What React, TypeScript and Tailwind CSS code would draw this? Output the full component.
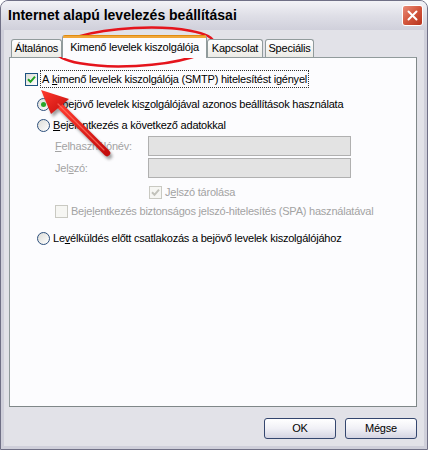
import React from "react";

function Check({ checked, disabled }: { checked?: boolean; disabled?: boolean }) {
  return (
    <span
      className={
        disabled
          ? "w-[13px] h-[13px] shrink-0 flex items-center justify-center border border-[#c9c9c2] bg-[#f6f6f3]"
          : "w-[13px] h-[13px] shrink-0 flex items-center justify-center border border-[#1c5180] bg-gradient-to-br from-[#dcdcd7] to-white"
      }
    >
      {checked && (
        <svg width="9" height="9" viewBox="0 0 9 9">
          <path
            d="M1 4.2 L3.5 6.8 L8 1.6"
            stroke={disabled ? "#c2c2bb" : "#21a121"}
            strokeWidth="2"
            fill="none"
          />
        </svg>
      )}
    </span>
  );
}

function Radio({ on }: { on?: boolean }) {
  return (
    <span className="w-[13px] h-[13px] shrink-0 rounded-full border border-[#2c4f7c] bg-gradient-to-br from-[#dcdcd7] to-white flex items-center justify-center">
      {on && <span className="w-[5px] h-[5px] rounded-full bg-[#2aa52a]" />}
    </span>
  );
}

function Tab({ label, w }: { label: string; w: string }) {
  return (
    <div
      className={`${w} h-[18px] mt-[4px] border border-b-0 border-[#919b9c] rounded-t-[3px] bg-gradient-to-b from-white to-[#ecebe6] flex items-center justify-center`}
    >
      {label}
    </div>
  );
}

export default function App() {
  return (
    <div className="w-[428px] h-[450px] bg-white font-['Liberation_Sans',Arial,sans-serif] text-[11px] text-black tracking-[-0.22px]">
      <div className="relative w-[428px] h-[450px] flex flex-col border border-[#707086] rounded-t-[8px] bg-[#cfcfda] overflow-hidden">
        {/* title bar */}
        <div className="h-[29px] shrink-0 flex items-center pl-[7px] pr-[4px] bg-gradient-to-b from-[#f3f3f7] via-[#dfdfe7] to-[#d0d0db]">
          <span className="font-bold text-[14px] tracking-normal">Internet alapú levelezés beállításai</span>
          <div className="ml-auto w-[21px] h-[21px] rounded-[3px] border border-white bg-gradient-to-br from-[#e98b78] via-[#d2553c] to-[#b8331d] flex items-center justify-center">
            <svg width="11" height="11" viewBox="0 0 11 11">
              <path d="M1.5 1.5 L9.5 9.5 M9.5 1.5 L1.5 9.5" stroke="white" strokeWidth="2" strokeLinecap="round" />
            </svg>
          </div>
        </div>

        {/* body */}
        <div className="flex-1 mx-[3px] mb-[3px] bg-[#e2e2e8] pl-[5px] pr-[7px] pt-[5px] flex flex-col">
          {/* tabs */}
          <div className="flex items-start h-[23px] pl-[2px] relative z-10">
            <Tab label="Általános" w="w-[51px]" />
            <div className="w-[145px] h-[23px] bg-[#fcfcfe] border-x border-[#919b9c] rounded-t-[3px] flex flex-col">
              <div className="h-[3px] bg-[#f1a73a] rounded-t-[2px] border-t border-[#e08c10]" />
              <div className="flex-1 flex items-center justify-center pb-[1px]">Kimenő levelek kiszolgálója</div>
            </div>
            <Tab label="Kapcsolat" w="w-[56px]" />
            <div className="w-[2px]" />
            <Tab label="Speciális" w="w-[49px]" />
          </div>

          {/* panel */}
          <div className="h-[350px] -mt-[1px] border border-[#919b9c] border-r-[#7f8788] border-b-[#7f8788] bg-[#fcfcfe] flex flex-col pl-[15px] pt-[12px]">
            <div className="flex items-center h-[18px]">
              <Check checked />
              <span className="ml-[2px] h-[18px] px-[1px] border border-dotted border-[#333] flex items-center">
                A&nbsp;<u>k</u>imenő levelek kiszolgálója (SMTP) hitelesítést igényel
              </span>
            </div>

            <div className="flex items-center h-[16px] mt-[8px] ml-[12px]">
              <Radio on />
              <span className="ml-[3px]">A bejövő levelek kis<u>z</u>olgálójával azonos beállítások használata</span>
            </div>

            <div className="flex items-center h-[16px] mt-[5px] ml-[12px]">
              <Radio />
              <span className="ml-[3px]"><u>B</u>ejelentkezés a következő adatokkal</span>
            </div>

            <div className="flex items-center h-[20px] mt-[3px] ml-[30px] text-[#a3a3a3]">
              <span className="w-[93px]"><u>F</u>elhasználónév:</span>
              <div className="w-[203px] h-[20px] border border-[#b0b0b0] bg-[#e3e3e3]" />
            </div>

            <div className="flex items-center h-[20px] mt-[2px] ml-[30px] text-[#a3a3a3]">
              <span className="w-[93px]">Jel<u>s</u>zó:</span>
              <div className="w-[203px] h-[20px] border border-[#b0b0b0] bg-[#e3e3e3]" />
            </div>

            <div className="flex items-center h-[16px] mt-[6px] ml-[124px] text-[#a3a3a3]">
              <Check checked disabled />
              <span className="ml-[3px]">J<u>e</u>lszó tárolása</span>
            </div>

            <div className="flex items-center h-[16px] mt-[3px] ml-[30px] text-[#a3a3a3]">
              <Check disabled />
              <span className="ml-[3px]">Beje<u>l</u>entkezés biztonságos jelszó-hitelesítés (SPA) használatával</span>
            </div>

            <div className="flex items-center h-[16px] mt-[11px] ml-[12px]">
              <Radio />
              <span className="ml-[3px]">Le<u>v</u>élküldés előtt csatlakozás a bejövő levelek kiszolgálójához</span>
            </div>
          </div>

          {/* buttons */}
          <div className="flex justify-end gap-[9px] mt-[11px]">
            <button className="w-[72px] h-[21px] rounded-[3px] border border-[#34466e] bg-gradient-to-b from-white via-[#f0f0f6] to-[#d4d4e2]">
              OK
            </button>
            <button className="w-[72px] h-[21px] rounded-[3px] border border-[#34466e] bg-gradient-to-b from-white via-[#f0f0f6] to-[#d4d4e2]">
              Mégse
            </button>
          </div>
        </div>

        {/* annotations */}
        <svg className="absolute left-[-1px] top-[-1px] pointer-events-none" width="428" height="450" viewBox="0 0 428 450">
          <defs>
            <filter id="sh" x="-20%" y="-20%" width="140%" height="140%">
              <feGaussianBlur stdDeviation="1.5" />
            </filter>
            <linearGradient id="ar" x1="0" y1="0" x2="1" y2="1">
              <stop offset="0" stopColor="#ff3a2e" />
              <stop offset="1" stopColor="#c40c0c" />
            </linearGradient>
          </defs>
          <ellipse cx="135" cy="47" rx="79" ry="19" transform="rotate(-3 135 47)" fill="none" stroke="#e5141c" strokeWidth="2.5" />
          <g opacity="0.45" filter="url(#sh)" transform="translate(2 3)">
            <line x1="60" y1="106" x2="107" y2="153" stroke="#333" strokeWidth="6.5" strokeLinecap="round" />
            <polygon points="41,90 69,99 51,114" fill="#333" />
          </g>
          <line x1="60" y1="106" x2="107" y2="153" stroke="url(#ar)" strokeWidth="6.5" strokeLinecap="round" />
          <polygon points="41,90 69,99 51,114" fill="url(#ar)" />
          <line x1="58" y1="104" x2="104" y2="150" stroke="#ff7a6a" strokeWidth="1.2" strokeLinecap="round" opacity="0.7" />
        </svg>
      </div>
    </div>
  );
}
